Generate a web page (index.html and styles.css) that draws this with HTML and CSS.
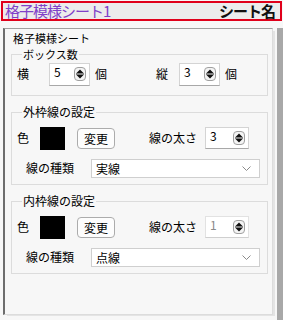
FILE: index.html
```html
<!DOCTYPE html>
<html lang="ja">
<head>
    <meta charset="UTF-8">
    <meta name="viewport" content="width=device-width, initial-scale=1.0">
    <title>格子模様シート</title>
    <link rel="stylesheet" href="styles.css">
</head>
<body>
    <div class="header">
        <span class="sheet-title">格子模様シート1</span>
        <span class="sheet-label">シート名</span>
    </div>

    <div class="frame">
        <div class="panel">
            <div class="panel-title">格子模様シート</div>

            <fieldset class="group group-count">
                <legend class="tight">ボックス数</legend>
                <div class="row">
                    <span class="lbl">横</span>
                    <div class="spin spin-x"><span>5</span><svg class="spin-icon" viewBox="0 0 12 14"><rect x="0.5" y="0.5" width="11" height="13" rx="3.5" fill="#f4f4f4" stroke="#a0a0a0"/><path d="M2.5 6 L6 2.5 L9.5 6 Z M2.5 8 L6 11.5 L9.5 8 Z" fill="#111"/><path d="M2 7 H10" stroke="#111"/></svg></div>
                    <span class="lbl unit">個</span>
                    <span class="lbl lbl-tate">縦</span>
                    <div class="spin spin-y"><span>3</span><svg class="spin-icon" viewBox="0 0 12 14"><rect x="0.5" y="0.5" width="11" height="13" rx="3.5" fill="#f4f4f4" stroke="#a0a0a0"/><path d="M2.5 6 L6 2.5 L9.5 6 Z M2.5 8 L6 11.5 L9.5 8 Z" fill="#111"/><path d="M2 7 H10" stroke="#111"/></svg></div>
                    <span class="lbl unit">個</span>
                </div>
            </fieldset>

            <fieldset class="group group-line">
                <legend>外枠線の設定</legend>
                <div class="row">
                    <span class="lbl">色</span>
                    <div class="swatch"></div>
                    <button class="btn">変更</button>
                    <span class="lbl lbl-width">線の太さ</span>
                    <div class="spin spin-w"><span>3</span><svg class="spin-icon" viewBox="0 0 12 14"><rect x="0.5" y="0.5" width="11" height="13" rx="3.5" fill="#f4f4f4" stroke="#a0a0a0"/><path d="M2.5 6 L6 2.5 L9.5 6 Z M2.5 8 L6 11.5 L9.5 8 Z" fill="#111"/><path d="M2 7 H10" stroke="#111"/></svg></div>
                </div>
                <div class="row row-type">
                    <span class="lbl lbl-type">線の種類</span>
                    <div class="select"><span>実線</span><svg class="chev" viewBox="0 0 9 5"><path d="M0.5 0.5 L4.5 4.5 L8.5 0.5" fill="none" stroke="#8a8a8a"/></svg></div>
                </div>
            </fieldset>

            <fieldset class="group group-line">
                <legend>内枠線の設定</legend>
                <div class="row">
                    <span class="lbl">色</span>
                    <div class="swatch"></div>
                    <button class="btn">変更</button>
                    <span class="lbl lbl-width">線の太さ</span>
                    <div class="spin spin-w spin-dim"><span>1</span><svg class="spin-icon" viewBox="0 0 12 14"><rect x="0.5" y="0.5" width="11" height="13" rx="3.5" fill="#f4f4f4" stroke="#a0a0a0"/><path d="M2.5 6 L6 2.5 L9.5 6 Z M2.5 8 L6 11.5 L9.5 8 Z" fill="#111"/><path d="M2 7 H10" stroke="#111"/></svg></div>
                </div>
                <div class="row row-type">
                    <span class="lbl lbl-type">線の種類</span>
                    <div class="select"><span>点線</span><svg class="chev" viewBox="0 0 9 5"><path d="M0.5 0.5 L4.5 4.5 L8.5 0.5" fill="none" stroke="#8a8a8a"/></svg></div>
                </div>
            </fieldset>
        </div>
        <div class="scroll-strip"></div>
    </div>
</body>
</html>
```

FILE: styles.css
```css
body {
    margin: 0;
    width: 283px;
    height: 320px;
    background-color: #f7f7f7;
    font-family: "Noto Sans CJK JP", "Noto Sans", sans-serif;
    font-size: 12px;
    color: #000;
    overflow: hidden;
}

.header {
    margin: 1px 1px 0 1px;
    height: 16px;
    border: 2px solid #e0001b;
    background-color: #ececec;
    display: flex;
    justify-content: space-between;
    align-items: center;
    padding: 0 5px 0 2px;
}

.sheet-title {
    color: #8040c8;
    font-size: 15px;
    letter-spacing: -1px;
    line-height: 16px;
}

.sheet-label {
    font-weight: bold;
    font-size: 15px;
    letter-spacing: -1px;
    line-height: 16px;
    color: #111;
}

.frame {
    display: flex;
    margin-top: 7px;
}

.panel {
    margin-left: 3px;
    width: 258px;
    height: 283px;
    border-left: 2px solid #6d6d6d;
    border-top: 1px solid #a0a0a0;
    border-right: 1px solid #dcdcdc;
    border-bottom: 1px solid #dcdcdc;
    box-shadow: 3px 2px 0 -1px #e4e4e4;
    background-color: #f7f7f7;
    padding: 2px 4px 0 6px;
}

.scroll-strip {
    margin-left: 4px;
    width: 6px;
    height: 300px;
    background-color: #a8a8a8;
}

.panel-title {
    font-size: 11px;
    line-height: 14px;
    padding-left: 2px;
    margin-bottom: 3px;
}

.group {
    margin: 0 0 9px 0;
    padding: 0 0 0 5px;
    border: 1px solid #dcdcdc;
    min-width: 0;
}

.group legend {
    padding: 0 1px 0 1px;
    margin-left: 5px;
    line-height: 14px;
}

.group legend.tight {
    font-size: 11px;
    line-height: 12px;
}

.group-count {
    padding-top: 2px;
    padding-bottom: 9px;
}

.group-line {
    padding-top: 7px;
    padding-bottom: 4px;
}

.row {
    display: flex;
    align-items: center;
    height: 24px;
}

.row-type {
    margin-top: 6px;
}

.lbl {
    line-height: 14px;
    white-space: nowrap;
}

.unit {
    margin-left: 5px;
}

.lbl-tate {
    margin-left: 49px;
}

.lbl-width {
    margin-left: 34px;
}

.lbl-type {
    margin-left: 9px;
}

.spin {
    height: 23px;
    background-color: #fff;
    border: 1px solid #d4d4d4;
    border-bottom-color: #a8a8a8;
    display: flex;
    align-items: center;
    justify-content: space-between;
    padding: 0 3px 0 4px;
    box-sizing: border-box;
}

.spin span {
    line-height: 12px;
    margin-top: -4px;
}

.spin-x {
    margin-left: 20px;
    width: 41px;
}

.spin-y {
    margin-left: 11px;
    width: 41px;
}

.spin-w {
    margin-left: 8px;
    width: 44px;
    height: 22px;
}

.spin-dim {
    border-color: #e2e2e2;
    border-bottom-color: #cfcfcf;
}

.spin-dim span {
    color: #8a8a8a;
}

.spin-icon {
    width: 12px;
    height: 14px;
}

.swatch {
    margin-left: 11px;
    width: 25px;
    height: 23px;
    background-color: #000;
}

.btn {
    margin-left: 12px;
    width: 38px;
    height: 21px;
    padding: 0;
    border: 1px solid #acacac;
    border-radius: 4px;
    background-color: #fdfdfd;
    font-family: inherit;
    font-size: 12px;
    color: #000;
}

.select {
    margin-left: 17px;
    width: 169px;
    height: 19px;
    box-sizing: border-box;
    background-color: #fff;
    border: 1px solid #cfcfcf;
    display: flex;
    align-items: center;
    justify-content: space-between;
    padding: 0 8px 0 4px;
}

.chev {
    width: 9px;
    height: 5px;
}
```
